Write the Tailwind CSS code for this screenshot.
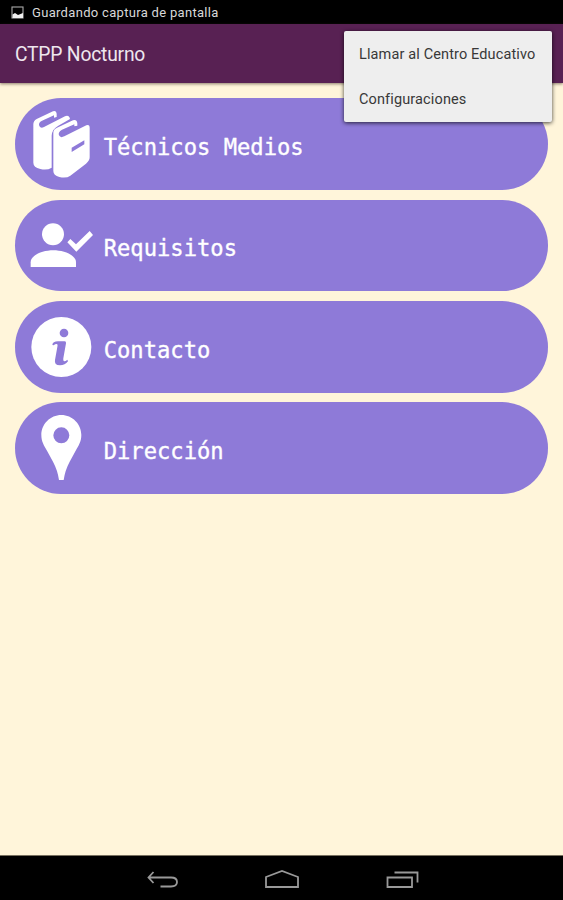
<!DOCTYPE html>
<html lang="es">
<head>
<meta charset="utf-8">
<title>CTPP Nocturno</title>
<script src="https://cdn.jsdelivr.net/npm/@tailwindcss/browser@4"></script>
</head>
<body class="relative flex h-[900px] w-[563px] flex-col overflow-hidden bg-[#fff5da] font-['Roboto',sans-serif]">
<div class="flex h-[24px] shrink-0 items-center bg-black pl-[11px] pt-[2px] text-[13px] tracking-[0.310px] text-[#d8d8d8]">
  <svg class="mr-[8px] h-[13px] w-[13px] -translate-y-px" viewBox="0 0 13 13"><rect x="1" y="1" width="11" height="11" fill="none" stroke="#aaa" stroke-width="1.1"/><path d="M1.500 8.500L4 7l3 2 5-2v5H1.500z" fill="#f0f0f0"/></svg>
  <span class="whitespace-nowrap">Guardando captura de pantalla</span>
</div>
<header class="z-10 flex h-[59px] shrink-0 items-center bg-[#582153] pl-[15px] pt-[4px] shadow-[0_1px_3px_rgba(60,40,30,0.6)]">
  <h1 class="text-[19.300px] tracking-[-0.210px] text-[#eee6ee]">CTPP Nocturno</h1>
</header>
<main class="flex flex-1 flex-col gap-[9.600px] px-[15px] pt-[15.300px]">
  <button class="flex h-[91.700px] shrink-0 items-center rounded-full bg-[#8e7ad8] text-left">
    <svg class="h-[92px] w-[88px] shrink-0" viewBox="15 24 264 276">
      <path d="M70 103Q70 93 80 87L129 64Q139 60 140 71V81L132 83V76L96 92Q84 98 88 108Q92 116 102 111L165 79Q177 74 180 87L145 107Q126 117 125 137V233Q111 242 91 237Q70 232 70 218Z" fill="#fff"/>
      <path d="M130 128Q130 118 141 113L189 91Q200 87 202 100V107L193 109V103L156 119Q143 127 147 136Q151 145 163 139L229 106Q239 102 239 114V202Q239 212 228 221L181 257Q169 266 148 261Q130 256 130 243Z" fill="#fff"/>
      <path d="M103 96L132 83V90L101 106Q96 107 94 102ZM160 125L193 109V117L164 132Q156 135 154 130ZM185 173L223 151V163L185 186Z" fill="#8e7ad8"/>
    </svg>
    <span class="pl-[0.700px] pt-[6px] font-['DejaVu_Sans_Mono',monospace] text-[22.150px] leading-none text-white [-webkit-text-stroke:0.350px_white]">Técnicos Medios</span>
  </button>
  <button class="flex h-[91.700px] shrink-0 items-center rounded-full bg-[#8e7ad8] text-left">
    <svg class="h-[92px] w-[88px] shrink-0" viewBox="15 13 264 276" fill="#fff">
      <circle cx="129" cy="119" r="33"/>
      <path d="M62 217V203C62 181 98 167 130 167S198 181 198 203V217Z"/>
      <path d="M172 143L181 133L198 149L239 109L249 121L199 171Z"/>
    </svg>
    <span class="pl-[0.700px] pt-[6px] font-['DejaVu_Sans_Mono',monospace] text-[22.150px] leading-none text-white [-webkit-text-stroke:0.350px_white]">Requisitos</span>
  </button>
  <button class="flex h-[91.700px] shrink-0 items-center rounded-full bg-[#8e7ad8] text-left">
    <svg class="h-[92px] w-[88px] shrink-0" viewBox="15 17 264 276">
      <circle cx="154" cy="155" r="90" fill="#fff"/>
      <g fill="#8e7ad8"><circle cx="162" cy="113" r="13"/><path d="M127 149Q128 138 144 138H164Q169 138 168 144L160 189Q159 198 163 198Q167 198 172 193L174 198Q165 210 150 210Q132 210 135 194L142 155Q144 146 140 146Q135 146 131 150Z"/></g>
    </svg>
    <span class="pl-[0.700px] pt-[6px] font-['DejaVu_Sans_Mono',monospace] text-[22.150px] leading-none text-white [-webkit-text-stroke:0.350px_white]">Contacto</span>
  </button>
  <button class="flex h-[91.700px] shrink-0 items-center rounded-full bg-[#8e7ad8] text-left">
    <svg class="h-[92px] w-[88px] shrink-0" viewBox="15 21 264 276">
      <path fill="#fff" fill-rule="evenodd" d="M154 60C187 60 214 87 214 120C214 139 206 152 197 167L179 200Q165 226 161 255H147Q143 226 129 200L111 167C102 152 94 139 94 120C94 87 121 60 154 60ZM154 97A24 24 0 1 0 154 145A24 24 0 1 0 154 97Z"/>
    </svg>
    <span class="pl-[0.700px] pt-[6px] font-['DejaVu_Sans_Mono',monospace] text-[22.150px] leading-none text-white [-webkit-text-stroke:0.350px_white]">Dirección</span>
  </button>
</main>
<nav class="flex h-[45px] shrink-0 items-center justify-center gap-[85px] border-t border-[#77705f] bg-black pt-[3px]">
  <svg class="h-[20px] w-[34px]" viewBox="0 0 34 20" fill="none" stroke="#999" stroke-width="1.8"><path d="M8.500 2L3.500 7.500L8.500 13M3.500 7.500H26Q32 7.500 32 12T26 16.500H15.500"/></svg>
  <svg class="h-[20px] w-[36px]" viewBox="0 0 36 20" fill="none" stroke="#999" stroke-width="1.800"><path d="M2 17V7L18 1L34 7V17Z"/></svg>
  <svg class="h-[20px] w-[34px]" viewBox="0 0 34 20" fill="none" stroke="#999" stroke-width="1.800"><path d="M2.500 7.500H27V17H2.500ZM9.500 2.500H32.500V12.500"/></svg>
</nav>
<div class="absolute left-[344px] top-[31px] z-20 flex h-[91px] w-[208px] flex-col rounded-[2px] bg-[#eee] pt-[1px] text-[14.500px] tracking-[0.130px] text-[#383838] shadow-[0_1px_4px_rgba(0,0,0,0.75)]">
  <div class="flex h-[45px] items-center whitespace-nowrap pl-[15px]">Llamar al Centro Educativo</div>
  <div class="flex h-[45px] items-center whitespace-nowrap pl-[15px]">Configuraciones</div>
</div>
</body>
</html>
